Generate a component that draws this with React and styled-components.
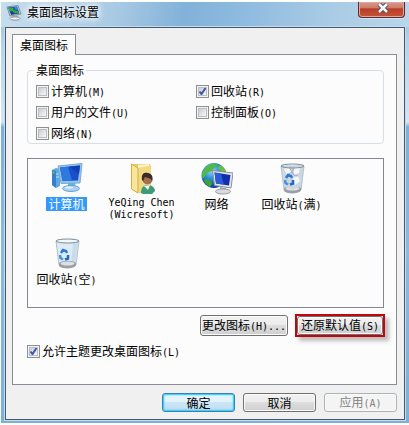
import React from 'react';
import styled, { createGlobalStyle } from 'styled-components'

const GlobalStyle = createGlobalStyle`
  * {
    box-sizing: border-box;
  }
  body {
    margin: 0;
    background: #fff;
  }
  body, button, input {
    font-family: "Noto Sans CJK SC", sans-serif;
    font-size: 12px;
    line-height: 14px;
    color: #000;
  }
`;

const Window = styled.div`
  margin: 2px 0 0 1px;
  padding: 0 4px 3px 4px;
  background: linear-gradient(180deg, #9fc3df 0, #a9cbe4 26px, #b4d3ea 40px, #d6e6f2 120px, #7db0d8 125px, #8bbadc 60%, #7cb0d6 100%);
`;

const TitleBar = styled.header`
  display: flex;
  align-items: flex-start;
  height: 25px;
  margin: 0 -4px;
  padding-left: 5px;
  background: linear-gradient(100deg, #c5ddee 0%, #a9cae4 28%, #82b1d9 45%, #8fbbdf 60%, #a9cbe5 80%, #b9d6ea 100%);
  svg {
    margin-top: 3px;
  }
`;

const Title = styled.h1`
  flex: 1;
  margin: 2px 0 0 5px;
  font-size: 12px;
  font-weight: 400;
  line-height: 16px;
  text-shadow: 0 0 6px #fff, 0 0 8px #fff, 0 0 8px #fff;
`;

const CloseButton = styled.button`
  display: flex;
  justify-content: center;
  align-items: center;
  width: 47px;
  height: 16px;
  margin-right: 4px;
  padding: 0;
  border: 1px solid #5a2a2c;
  border-top: 0;
  border-radius: 0 0 4px 4px;
  box-shadow: inset 0 0 0 1px #e0a59c, 0 1px 0 #d5e6f2;
  background: linear-gradient(180deg, #d99a8c 0, #cc7c6c 40%, #b93d28 45%, #c65538 100%);
  svg {
    margin: 0 0 4px 2px;
  }
`;

const Client = styled.main`
  padding: 6px 7px 7px 6px;
  border: 1px solid #44596b;
  box-shadow: 0 0 0 1px #c3dcee;
  background: #f0f0f0;
`;

const Tab = styled.button`
  display: block;
  position: relative;
  height: 21px;
  margin-bottom: -1px;
  padding: 0 7px;
  border: 1px solid #898c95;
  border-bottom: 0;
  background: #fcfcfc;
`;

const Panel = styled.section`
  display: flex;
  flex-direction: column;
  padding: 8px 12px 26px 14px;
  border: 1px solid #898c95;
  background: #fcfcfc;
`;

const Group = styled.fieldset`
  display: grid;
  grid-template-columns: 160px 1fr;
  grid-auto-rows: 14px;
  row-gap: 7px;
  margin: 0;
  padding: 7px 8px 3px 8px;
  border: 1px solid #d5dfe5;
  border-radius: 4px;
  legend {
    padding: 0 2px;
    margin-left: -2px;
  }
`;

const CheckLabel = styled.label`
  display: flex;
  align-items: center;
  gap: 2px;
  height: 14px;
`;

const CheckInput = styled.input`
  appearance: none;
  flex: none;
  width: 13px;
  height: 13px;
  margin: 0;
  border: 1px solid #8e8f8f;
  box-shadow: inset 0 0 0 1px #f4f4f4, inset 0 0 0 2px #b9bec6;
  background: linear-gradient(135deg, #cbcfd5 20%, #f6f6f6 80%);
  &:checked {
    background: url("data:image/svg+xml,%3Csvg xmlns='http://www.w3.org/2000/svg' viewBox='0 0 11 11'%3E%3Cpath d='M2.5 5.5L4.5 8L8.5 2' fill='none' stroke='%233f55a5' stroke-width='2'/%3E%3C/svg%3E"), linear-gradient(135deg, #cbcfd5 20%, #f6f6f6 80%);
  }
`;

const IconList = styled.ul`
  display: grid;
  grid-template-columns: repeat(auto-fill, 75px);
  grid-auto-rows: 75px;
  align-content: start;
  height: 150px;
  margin: 14px 0 0 0;
  padding: 4px 0 0 1px;
  border: 1px solid #828790;
  list-style: none;
`;

const IconItem = styled.li`
  display: flex;
  flex-direction: column;
  align-items: center;
  text-align: center;
  svg {
    flex: none;
    margin-bottom: 2px;
  }
`;

const IconName = styled.span`
  padding: 0 2px;
  line-height: 14px;
  white-space: nowrap;
  color: ${props => props.$selected ? '#fff' : '#000'};
  background: ${props => props.$selected ? '#3399ff' : 'transparent'};
`;

const Latin = styled.span`
  display: ${props => props.$block ? 'block' : 'inline'};
  font-family: "DejaVu Sans Mono", "Liberation Mono", monospace;
  font-size: 10px;
  line-height: 12px;
`;

const Buttons = styled.div`
  display: flex;
  justify-content: flex-end;
  gap: 8px;
  margin: ${props => props.$margin};
`;

const Button = styled.button`
  width: ${props => props.$width || '73px'};
  height: ${props => props.$height || '19px'};
  padding: 0;
  white-space: nowrap;
  line-height: 14px;
  border: 1px solid #707070;
  border-radius: 3px;
  box-shadow: inset 0 0 0 1px #fafafa;
  background: linear-gradient(180deg, #f2f2f2 0, #ebebeb 50%, #dddddd 50%, #cfcfcf 100%);
  &:disabled {
    color: #838383;
    border-color: #adb2b5;
    background: #f4f4f4;
  }
`;

const DefaultButton = styled(Button)`
  border-color: #3c7fb1;
  box-shadow: inset 0 0 0 1px #41d0f8, inset 0 0 2px 1px #41d0f8;
  background: linear-gradient(180deg, #ecf5fb 0, #e0f1fa 50%, #cbe6f6 50%, #c0ddf0 100%);
`;

const Highlight = styled.div`
  margin: -1px -1px -1px -1px;
  border: 2px solid #c4060c;
  box-shadow: 4px 4px 4px rgba(0, 0, 0, 0.25);
  button {
    display: block;
  }
`;

const Check = ({ name, hotkey, checked }) => (
  <CheckLabel>
    <CheckInput type='checkbox' defaultChecked={checked}/>
    <span>{name}<Latin>({hotkey})</Latin></span>
  </CheckLabel>
);

const ComputerIcon = () => (
  <svg width='32' height='32' viewBox='0 0 32 32'>
    <path d='M1 7L5 5L9 6V23L5 25L1 22Z' fill='#5ea8e4'/>
    <path d='M1 7L5 8V25L1 22Z' fill='#3a80c6'/>
    <path d='M5 11H8M5 14H8' stroke='#b5e2fb'/>
    <circle cx='2.5' cy='9.5' r='1' fill='#5bd06b'/>
    <path d='M7 3L31 0.5L29 20L10 20.5Z' fill='#8fc7f1' stroke='#7aa9d0'/>
    <path d='M9 4.5L29 2.5L27 17.5L11.5 18Z' fill='#1a4fcb'/>
    <path d='M9 4.5L17 3.5L21 17.7L11.5 18Z' fill='#2f78e0'/>
    <path d='M18 3.5L29 2.5L28 11Z' fill='#1240b4'/>
    <path d='M17 20H24L25 25H17Z' fill='#6faee0'/>
    <ellipse cx='20' cy='25.5' rx='8.5' ry='3' fill='#a6d2f3' stroke='#6fa3cf'/>
    <ellipse cx='18' cy='24.5' rx='4' ry='1' fill='#e0f3ff'/>
  </svg>
);

const UserFolderIcon = () => (
  <svg width='32' height='32' viewBox='0 0 32 32'>
    <path d='M6 1L24 1L25 4V27L12 30L6 27Z' fill='#e9cd6a'/>
    <path d='M12 2L23 1V24L12 28Z' fill='#fdf5c4'/>
    <path d='M12 5L24 2.5L25 6V27L12 30Z' fill='#f1da83'/>
    <path d='M5.5 1L12 5V30L5.5 26Z' fill='#fae69a' stroke='#cfae49'/>
    <path d='M15 30C15 24 18 22 22 22C26 22 29 25 29 28L26 31H17Z' fill='#3f9b76'/>
    <path d='M18 23L22 27L24 22Z' fill='#f4f6f4'/>
    <circle cx='21.5' cy='16.5' r='5' fill='#a66e4c'/>
    <path d='M16 17C15 10 19 9 22 10C27 11 27 15 26 18C25 15 22 15 19 14C18 15 18 17 17 18Z' fill='#382c29'/>
  </svg>
);

const NetworkIcon = () => (
  <svg width='32' height='32' viewBox='0 0 32 32'>
    <defs>
      <radialGradient id='globe' cx='0.4' cy='0.3' r='0.7'>
        <stop offset='0' stopColor='#8fdcff'/>
        <stop offset='0.5' stopColor='#2788d7'/>
        <stop offset='1' stopColor='#0b3c94'/>
      </radialGradient>
    </defs>
    <circle cx='13' cy='12.5' r='12.5' fill='url(#globe)'/>
    <path d='M4 5C8 0 14 0 17 2L13 5L11 8L6 10L2 16C0 12 1 9 4 5Z' fill='#52b848'/>
    <path d='M18 2C22 3 25 7 25 9L20 8L17 6Z' fill='#62c23f'/>
    <path d='M5 16L10 17L11 21L9 24C5 22 3 19 3 17Z' fill='#3ca33c'/>
    <path d='M11.5 7.5L32 10L30 25L13.5 22.5Z' fill='#e4e7ea' stroke='#8b9198'/>
    <path d='M13.5 9.5L29.5 12L28 22.5L15 20.5Z' fill='#0f2fae'/>
    <path d='M13.5 9.5L20 10.5L23 21.7L15 20.5Z' fill='#2a5bd4'/>
    <path d='M19 24L25 25V28H19Z' fill='#a6abb1'/>
    <ellipse cx='22' cy='28.5' rx='7.5' ry='2.5' fill='#d9dcdf' stroke='#989da2'/>
  </svg>
);

const BinIcon = ({ full }) => (
  <svg width='32' height='32' viewBox='0 0 32 32'>
    <path d='M5 3L8 27C11 31 22 31 25 27L28 3Z' fill={full ? '#d0dde8' : '#dcebf6'} stroke='#b3c1cc'/>
    <path d='M22 5L27 4L24 26L20 27Z' fill='#c1d5e6' opacity='0.7'/>
    <path d='M8 25C11 22 22 22 25 25V27.5C22 31 11 31 8 28Z' fill='#9a9fa4'/>
    <ellipse cx='16.5' cy='25.5' rx='7' ry='2' fill='#dde0e2'/>
    {full &&
      <>
        <path d='M7 4L12 2L17 4L23 1L27 4L25 14L24 24L17 26L9 24Z' fill='#cbd6e0'/>
        <path d='M8 6L13 4L16 9L11 12ZM18 5L24 4L23 10L18 12ZM17 15L22 13L24 18L19 22Z' fill='#f5f8fb'/>
        <path d='M13 4L16 9L18 5M11 12L16 9L18 12L22 13' fill='none' stroke='#a3b1bf'/>
      </>
    }
    <ellipse cx='16.5' cy='3' rx='11.5' ry='2' fill={full ? 'none' : '#f2f8fc'} stroke='#7f8b96'/>
    <path d='M10 15L12 12L15 13L16 15' fill='none' stroke='#2c7bdb' strokeWidth='2.5'/>
    <path d='M17 17L17 20.5L14 21.5' fill='none' stroke='#2468c8' strokeWidth='2.5'/>
    <path d='M12 21.5L9.5 20L9 17' fill='none' stroke='#4491e6' strokeWidth='2.5'/>
  </svg>
);

const SettingsIcon = () => (
  <svg width='16' height='16' viewBox='0 0 16 16'>
    <path d='M1 2L12 0.5L15 9L4 11Z' fill='#dfe6ea' stroke='#7d8b97'/>
    <path d='M2 2.5L11 1.5L13.5 8.5L5 10Z' fill='#1c3f9c'/>
    <path d='M2.5 3L7 2.5L8 5L12 6L13 8L9 8.5L7 6.5L3.5 6Z' fill='#2fae45'/>
    <path d='M8 2L11 1.5L12.5 5L9 4.5Z' fill='#3d85e6'/>
    <path d='M7 10.5L11 10L12 13H7Z' fill='#a3adb5'/>
    <ellipse cx='9' cy='13.5' rx='5' ry='1.7' fill='#eef1f3' stroke='#87929b'/>
  </svg>
);

const CloseIcon = () => (
  <svg width='12' height='10' viewBox='0 0 12 10'>
    <path d='M2 1L10 9M10 1L2 9' stroke='#4a4f5c' strokeWidth='4.5'/>
    <path d='M2 1L10 9M10 1L2 9' stroke='#f6f6f6' strokeWidth='2.5'/>
  </svg>
);

const App = () => {
  return (
    <>
      <GlobalStyle/>
      <Window>
        <TitleBar>
          <SettingsIcon/>
          <Title>桌面图标设置</Title>
          <CloseButton aria-label='关闭'><CloseIcon/></CloseButton>
        </TitleBar>
        <Client>
          <Tab>桌面图标</Tab>
          <Panel>
            <Group>
              <legend>桌面图标</legend>
              <Check name='计算机' hotkey='M'/>
              <Check name='回收站' hotkey='R' checked/>
              <Check name='用户的文件' hotkey='U'/>
              <Check name='控制面板' hotkey='O'/>
              <Check name='网络' hotkey='N'/>
            </Group>
            <IconList>
              <IconItem>
                <ComputerIcon/>
                <IconName $selected>计算机</IconName>
              </IconItem>
              <IconItem>
                <UserFolderIcon/>
                <IconName>
                  <Latin $block>YeQing Chen</Latin>
                  <Latin $block>(Wicresoft)</Latin>
                </IconName>
              </IconItem>
              <IconItem>
                <NetworkIcon/>
                <IconName>网络</IconName>
              </IconItem>
              <IconItem>
                <BinIcon full/>
                <IconName>回收站<Latin>(</Latin>满<Latin>)</Latin></IconName>
              </IconItem>
              <IconItem>
                <BinIcon/>
                <IconName>回收站<Latin>(</Latin>空<Latin>)</Latin></IconName>
              </IconItem>
            </IconList>
            <Buttons $margin='7px 0 8px 0'>
              <Button $width='88px' $height='21px'>更改图标<Latin>(H)...</Latin></Button>
              <Highlight>
                <Button $width='86px'>还原默认值<Latin>(S)</Latin></Button>
              </Highlight>
            </Buttons>
            <Check name='允许主题更改桌面图标' hotkey='L' checked/>
          </Panel>
          <Buttons $margin='8px 0 0 0'>
            <DefaultButton>确定</DefaultButton>
            <Button>取消</Button>
            <Button disabled>应用<Latin>(A)</Latin></Button>
          </Buttons>
        </Client>
      </Window>
    </>
  );
}

export default App;
